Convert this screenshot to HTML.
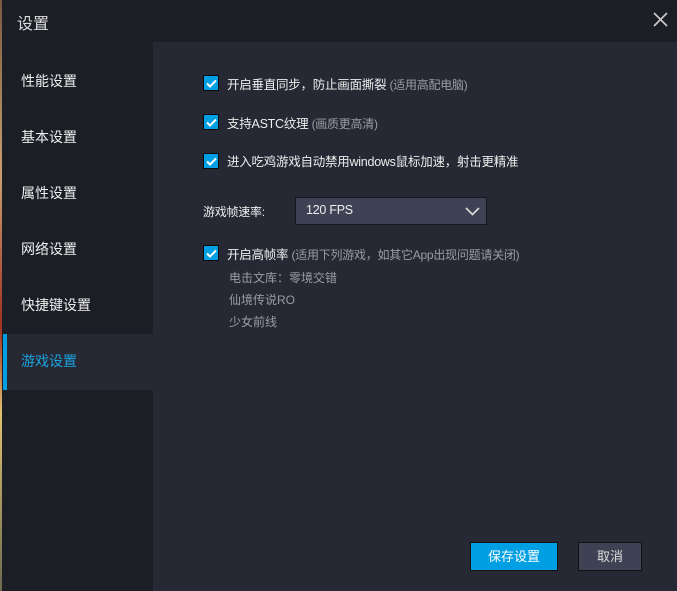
<!DOCTYPE html><html><head><meta charset="utf-8"><style>
*{margin:0;padding:0;box-sizing:border-box}
body{width:677px;height:591px;background:#1c1e25;position:relative;overflow:hidden;font-family:"Liberation Sans","Noto Sans CJK SC",sans-serif;color:#e6e6e6;font-size:13px}
.strip{position:absolute;left:0;top:0;width:2px;height:591px;background:linear-gradient(#7a5a40,#c9a070 30%,#a03020 55%,#e0c070 70%,#6a6a50)}
.title{position:absolute;left:17px;top:10px;font-size:16px;color:#dcdcdc}
.close{position:absolute;left:653px;top:12px}
.side div{position:absolute;left:21px;font-size:14px;color:#eee}
.active{position:absolute;left:3px;top:334px;width:150px;height:56px;background:#262834;border-left:4px solid #009fe3}
.content{position:absolute;left:153px;top:42px;width:524px;height:549px;background:#262834}
.cb{position:absolute;width:16px;height:16px;background:#009fe3;border:1px solid #0a0a0a}
.cb svg{position:absolute;left:2px;top:3px}
.t{position:absolute;font-size:12.5px;letter-spacing:-0.25px;color:#eee;white-space:nowrap}
.t span{color:#9a9ca4;font-size:12px}
.g{position:absolute;font-size:12px;color:#9a9ca4}
.dd{position:absolute;left:295px;top:197px;width:192px;height:28px;background:#3f4254;border:1px solid #17181d}
.btn{position:absolute;top:542px;height:29px;border:1px solid #111;text-align:center;line-height:27px;font-size:13px}
</style></head><body>
<div class="strip"></div>
<div class="title">设置</div>
<svg class="close" width="15" height="15" viewBox="0 0 15 15"><path d="M1 1L14 14M14 1L1 14" stroke="#ccc" stroke-width="1.6"/></svg>
<div class="active"></div>
<div class="side">
<div style="top:71px">性能设置</div>
<div style="top:127px">基本设置</div>
<div style="top:183px">属性设置</div>
<div style="top:239px">网络设置</div>
<div style="top:295px">快捷键设置</div>
<div style="top:351px;color:#1aa3e0">游戏设置</div>
</div>
<div class="content"></div>
<div class="cb" style="left:203px;top:75px"><svg width="11" height="9"><path d="M1 4.5L4 7.5L10 1.5" stroke="#fff" stroke-width="2" fill="none"/></svg></div>
<div class="t" style="left:227px;top:74px">开启垂直同步，防止画面撕裂 <span>(适用高配电脑)</span></div>
<div class="cb" style="left:203px;top:114px"><svg width="11" height="9"><path d="M1 4.5L4 7.5L10 1.5" stroke="#fff" stroke-width="2" fill="none"/></svg></div>
<div class="t" style="left:227px;top:113px">支持ASTC纹理 <span>(画质更高清)</span></div>
<div class="cb" style="left:203px;top:153px"><svg width="11" height="9"><path d="M1 4.5L4 7.5L10 1.5" stroke="#fff" stroke-width="2" fill="none"/></svg></div>
<div class="t" style="left:227px;top:151px">进入吃鸡游戏自动禁用windows鼠标加速，射击更精准</div>
<div class="t" style="left:203px;top:203px;font-size:12px">游戏帧速率:</div>
<div class="dd"><div class="t" style="left:10px;top:5px">120 FPS</div>
<svg style="position:absolute;left:169px;top:9px" width="15" height="9"><path d="M1 1L7.5 7.5L14 1" stroke="#ddd" stroke-width="1.6" fill="none"/></svg></div>
<div class="cb" style="left:203px;top:245px"><svg width="11" height="9"><path d="M1 4.5L4 7.5L10 1.5" stroke="#fff" stroke-width="2" fill="none"/></svg></div>
<div class="t" style="left:227px;top:244px">开启高帧率 <span>(适用下列游戏，如其它App出现问题请关闭)</span></div>
<div class="g" style="left:229px;top:269px">电击文库：零境交错</div>
<div class="g" style="left:229px;top:291px">仙境传说RO</div>
<div class="g" style="left:229px;top:313px">少女前线</div>
<div class="btn" style="left:470px;width:88px;background:#009fe3;color:#fff">保存设置</div>
<div class="btn" style="left:578px;width:64px;background:#3f4254;color:#ddd">取消</div>
</body></html>
